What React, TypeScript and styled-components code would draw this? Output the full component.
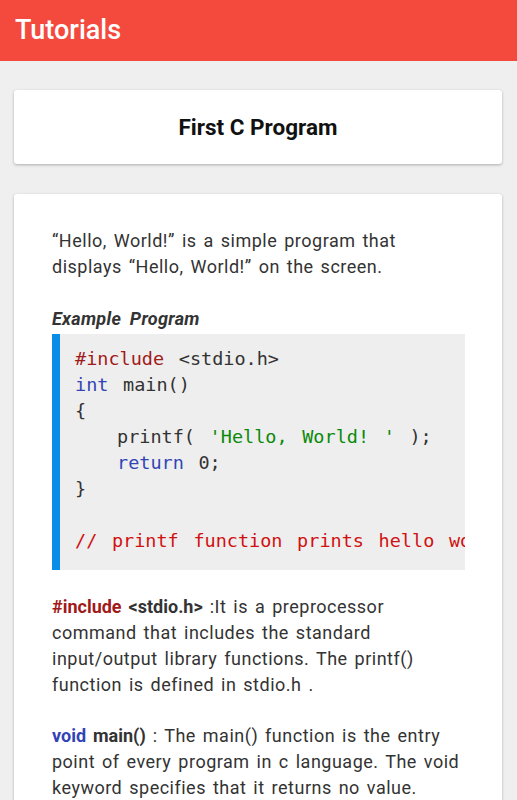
import React from 'react';
import styled, { createGlobalStyle } from 'styled-components';

const GlobalStyle = createGlobalStyle`
  html, body {
    margin: 0;
    padding: 0;
    background: #efefef;
    font-family: Roboto, "Liberation Sans", sans-serif;
  }
`;

const Page = styled.div`
  min-height: 800px;
  background: #efefef;
`;

const Header = styled.header`
  height: 61px;
  background: #f44a3e;
  display: flex;
  align-items: center;
  padding: 0 15px;
`;

const HeaderTitle = styled.h1`
  margin: 0 0 2px;
  font-size: 27px;
  font-weight: 500;
  color: #fff;
`;

const Content = styled.main`
  display: flex;
  flex-direction: column;
  gap: 30px;
  padding: 29px 15px 0 14px;
`;

const Card = styled.section`
  background: #fff;
  border-radius: 3px;
  box-shadow: 0 1px 3px rgba(0, 0, 0, 0.28);
`;

const TitleCard = styled(Card)`
  height: 74px;
  display: flex;
  align-items: center;
  justify-content: center;
`;

const CardTitle = styled.h2`
  margin: 0;
  font-size: 22.5px;
  font-weight: 700;
  color: #111;
`;

const Body = styled(Card)`
  padding: 34px 37px 40px 38px;
  color: #333;
  font-size: 18px;
  line-height: 26px;
  letter-spacing: 0.5px;
  word-spacing: 2px;
`;

const Paragraph = styled.p<{ gap?: number }>`
  margin: 0 0 ${({ gap }) => gap ?? 25}px;
`;

const Subheading = styled.h3`
  margin: 0;
  font-size: 18px;
  font-weight: 700;
  font-style: italic;
  color: #333;
  line-height: 26px;
  letter-spacing: 0.3px;
  word-spacing: 4px;
`;

const CodeBlock = styled.pre`
  margin: 2px 0 24px;
  padding: 12px 0 16px 15px;
  background: #eeeeee;
  border-left: 8px solid #0a8de9;
  overflow: hidden;
  font-family: "DejaVu Sans Mono", "Liberation Mono", monospace;
  font-size: 18.5px;
  line-height: 26px;
  letter-spacing: 0;
  word-spacing: 3.5px;
  color: #333;
`;

const CodeLine = styled.div<{ indent?: boolean }>`
  height: 26px;
  white-space: pre;
  padding-left: ${({ indent }) => (indent ? '42px' : '0')};
`;

type Tone = 'directive' | 'keyword' | 'string' | 'comment';

const toneColors: Record<Tone, string> = {
  directive: '#a11a1a',
  keyword: '#3244b5',
  string: '#0a8a0a',
  comment: '#d11111',
};

const Tok = styled.span<{ tone: Tone }>`
  color: ${({ tone }) => toneColors[tone]};
`;

const Strong = styled.b<{ tone?: Tone }>`
  font-weight: 700;
  letter-spacing: 0;
  color: ${({ tone }) => (tone ? toneColors[tone] : '#333')};
`;

export default function App() {
  return (
    <Page>
      <GlobalStyle />
      <Header>
        <HeaderTitle>Tutorials</HeaderTitle>
      </Header>
      <Content>
        <TitleCard>
          <CardTitle>First C Program</CardTitle>
        </TitleCard>
        <Body>
          <Paragraph gap={26}>
            “Hello, World!” is a simple program that displays “Hello, World!” on the screen.
          </Paragraph>
          <Subheading>Example Program</Subheading>
          <CodeBlock>
            <CodeLine>
              <Tok tone="directive">#include</Tok> &lt;stdio.h&gt;
            </CodeLine>
            <CodeLine>
              <Tok tone="keyword">int</Tok> main()
            </CodeLine>
            <CodeLine>{'{'}</CodeLine>
            <CodeLine indent>
              printf( <Tok tone="string">'Hello, World! '</Tok> );
            </CodeLine>
            <CodeLine indent>
              <Tok tone="keyword">return</Tok> 0;
            </CodeLine>
            <CodeLine>{'}'}</CodeLine>
            <CodeLine />
            <CodeLine>
              <Tok tone="comment">// printf function prints hello world on the screen</Tok>
            </CodeLine>
          </CodeBlock>
          <Paragraph>
            <Strong tone="directive">#include</Strong> <Strong>&lt;stdio.h&gt;</Strong> :It is a
            preprocessor command that includes the standard input/output library functions. The
            printf() function is defined in stdio.h .
          </Paragraph>
          <Paragraph>
            <Strong tone="keyword">void</Strong> <Strong>main()</Strong> : The main() function is
            the entry point of every program in c language. The void keyword specifies that it
            returns no value.
          </Paragraph>
        </Body>
      </Content>
    </Page>
  );
}
